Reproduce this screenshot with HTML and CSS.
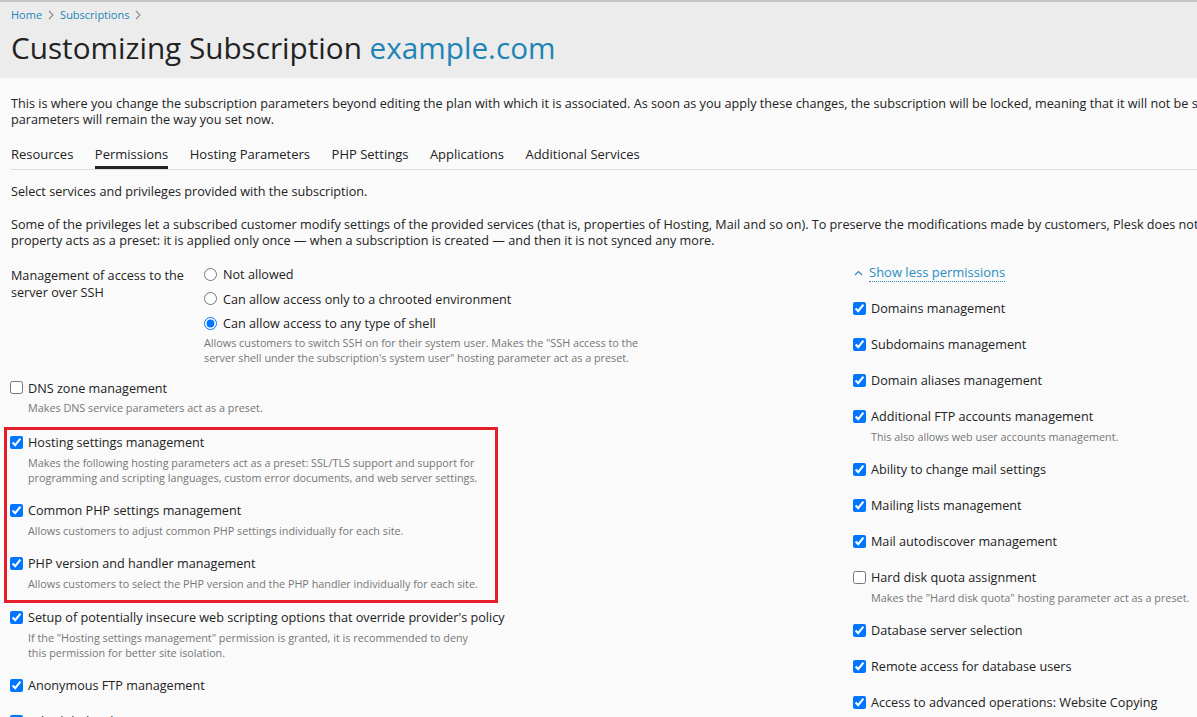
FILE: index.html
```html
<!DOCTYPE html>
<html lang="en">
<head>
<meta charset="utf-8">
<title>Customizing Subscription example.com</title>
<link rel="stylesheet" href="styles.css">
</head>
<body>
<header class="page-header">
  <nav class="breadcrumbs">
    <a href="#">Home</a>
    <svg class="crumb-sep" width="8" height="10" viewBox="0 0 8 10"><polyline points="2,1 6,5 2,9" fill="none" stroke="#8a8a8a" stroke-width="1.1"/></svg>
    <a href="#">Subscriptions</a>
    <svg class="crumb-sep" width="8" height="10" viewBox="0 0 8 10"><polyline points="2,1 6,5 2,9" fill="none" stroke="#8a8a8a" stroke-width="1.1"/></svg>
  </nav>
  <h1 class="title">Customizing Subscription <span class="title-domain">example.com</span></h1>
</header>

<main class="content">
  <p class="intro">This is where you change the subscription parameters beyond editing the plan with which it is associated. As soon as you apply these changes, the subscription will be locked, meaning that it will not be synchronized with the plan, and its<br>parameters will remain the way you set now.</p>

  <ul class="tabs">
    <li class="tab">Resources</li>
    <li class="tab tab-active">Permissions</li>
    <li class="tab">Hosting Parameters</li>
    <li class="tab">PHP Settings</li>
    <li class="tab">Applications</li>
    <li class="tab">Additional Services</li>
  </ul>

  <p class="lead">Select services and privileges provided with the subscription.</p>
  <p class="note">Some of the privileges let a subscribed customer modify settings of the provided services (that is, properties of Hosting, Mail and so on). To preserve the modifications made by customers, Plesk does not sync such settings with the plan. Each such<br>property acts as a preset: it is applied only once — when a subscription is created — and then it is not synced any more.</p>

  <div class="columns">
    <div class="col-left">
      <div class="form-row">
        <div class="row-label">Management of access to the server over SSH</div>
        <div class="row-field">
          <label class="radio"><input type="radio" name="ssh"><span>Not allowed</span></label>
          <label class="radio"><input type="radio" name="ssh"><span>Can allow access only to a chrooted environment</span></label>
          <label class="radio"><input type="radio" name="ssh" checked><span>Can allow access to any type of shell</span></label>
          <div class="desc desc-radio">Allows customers to switch SSH on for their system user. Makes the "SSH access to the<br>server shell under the subscription's system user" hosting parameter act as a preset.</div>
        </div>
      </div>

      <div class="item">
        <label class="check"><input type="checkbox"><span>DNS zone management</span></label>
        <div class="desc">Makes DNS service parameters act as a preset.</div>
      </div>

      <div class="highlight">
        <div class="item">
          <label class="check"><input type="checkbox" checked><span>Hosting settings management</span></label>
          <div class="desc">Makes the following hosting parameters act as a preset: SSL/TLS support and support for<br>programming and scripting languages, custom error documents, and web server settings.</div>
        </div>
        <div class="item">
          <label class="check"><input type="checkbox" checked><span>Common PHP settings management</span></label>
          <div class="desc">Allows customers to adjust common PHP settings individually for each site.</div>
        </div>
        <div class="item">
          <label class="check"><input type="checkbox" checked><span>PHP version and handler management</span></label>
          <div class="desc">Allows customers to select the PHP version and the PHP handler individually for each site.</div>
        </div>
      </div>

      <div class="item">
        <label class="check"><input type="checkbox" checked><span>Setup of potentially insecure web scripting options that override provider's policy</span></label>
        <div class="desc">If the "Hosting settings management" permission is granted, it is recommended to deny<br>this permission for better site isolation.</div>
      </div>
      <div class="item">
        <label class="check"><input type="checkbox" checked><span>Anonymous FTP management</span></label>
      </div>
      <div class="item">
        <label class="check"><input type="checkbox" checked><span>Scheduled tasks management</span></label>
      </div>
    </div>

    <div class="col-right">
      <a class="toggle" href="#">
        <svg class="toggle-icon" width="9" height="6" viewBox="0 0 9 6"><polyline points="1,5 4.5,1.5 8,5" fill="none" stroke="#2a8ec2" stroke-width="1.2"/></svg>
        <span class="toggle-text">Show less permissions</span>
      </a>
      <div class="item">
        <label class="check"><input type="checkbox" checked><span>Domains management</span></label>
      </div>
      <div class="item">
        <label class="check"><input type="checkbox" checked><span>Subdomains management</span></label>
      </div>
      <div class="item">
        <label class="check"><input type="checkbox" checked><span>Domain aliases management</span></label>
      </div>
      <div class="item">
        <label class="check"><input type="checkbox" checked><span>Additional FTP accounts management</span></label>
        <div class="desc">This also allows web user accounts management.</div>
      </div>
      <div class="item">
        <label class="check"><input type="checkbox" checked><span>Ability to change mail settings</span></label>
      </div>
      <div class="item">
        <label class="check"><input type="checkbox" checked><span>Mailing lists management</span></label>
      </div>
      <div class="item">
        <label class="check"><input type="checkbox" checked><span>Mail autodiscover management</span></label>
      </div>
      <div class="item">
        <label class="check"><input type="checkbox"><span>Hard disk quota assignment</span></label>
        <div class="desc">Makes the "Hard disk quota" hosting parameter act as a preset.</div>
      </div>
      <div class="item">
        <label class="check"><input type="checkbox" checked><span>Database server selection</span></label>
      </div>
      <div class="item">
        <label class="check"><input type="checkbox" checked><span>Remote access for database users</span></label>
      </div>
      <div class="item">
        <label class="check"><input type="checkbox" checked><span>Access to advanced operations: Website Copying</span></label>
      </div>
      <div class="item">
        <label class="check"><input type="checkbox" checked><span>Access to advanced operations: Website Importing</span></label>
      </div>
    </div>
  </div>
</main>
</body>
</html>
```

FILE: styles.css
```css
html, body {
  margin: 0;
  padding: 0;
  overflow: hidden;
  height: 100%;
}

body {
  font-family: "Open Sans", "Liberation Sans", sans-serif;
  font-size: 12.65px;
  color: #222222;
  background: #fafafa;
}

a {
  color: #1e84b6;
  text-decoration: none;
}

.page-header {
  background: #ececec;
  border-top: 2px solid #c4c4c4;
  padding: 5px 11px 12px;
}

.breadcrumbs {
  display: flex;
  align-items: center;
  gap: 4px;
  font-size: 11px;
  line-height: 16px;
}

.crumb-sep {
  margin: 0 1px;
}

.title {
  margin: 7px 0 0;
  font-size: 29.7px;
  line-height: 36px;
  font-weight: 400;
  color: #222222;
}

.title-domain {
  color: #1e84b6;
}

.content {
  padding: 0 0 0 11px;
}

.intro {
  margin: 17px 0 0;
  line-height: 16px;
  white-space: nowrap;
}

.tabs {
  list-style: none;
  margin: 19px 0 0;
  padding: 0;
  display: flex;
  gap: 21.5px;
  border-bottom: 1px solid #dcdcdc;
  width: 1400px;
  font-size: 13px;
}

.tab {
  line-height: 16px;
  padding-bottom: 7px;
  color: #222222;
}

.tab-active {
  box-shadow: inset 0 -3px 0 #222222;
}

.lead {
  margin: 13px 0 0;
  line-height: 16px;
}

.note {
  margin: 17px 0 0;
  line-height: 16px;
  white-space: nowrap;
}

.columns {
  display: grid;
  grid-template-columns: 842px 600px;
  margin-top: 17px;
}

.col-left {
  margin-left: -1px;
}

.form-row {
  display: grid;
  grid-template-columns: 194px 1fr;
  margin-bottom: 14px;
}

.row-label {
  line-height: 17px;
  width: 180px;
  padding-left: 1px;
  margin-top: 2px;
}

.row-field {
  display: flex;
  flex-direction: column;
  gap: 6.5px;
}

.radio,
.check {
  display: flex;
  align-items: center;
  gap: 6px;
  line-height: 18px;
}

.check {
  gap: 5px;
}

.radio input,
.check input {
  margin: 0;
  width: 13px;
  height: 13px;
  flex: none;
}

.desc {
  font-size: 10.8px;
  line-height: 15px;
  color: #767676;
  margin: 3.5px 0 -1.5px 18px;
}

.desc-radio {
  margin: -4px 0 0;
}

.item {
  margin-bottom: 18px;
}

.highlight {
  width: 494px;
  box-sizing: border-box;
  margin: -6px 0 5px -6px;
  padding: 3px 0 11px 3px;
  border: 3px solid #e41f2b;
}

.highlight .item:last-child {
  margin-bottom: 0;
}

.col-right {
  display: flex;
  flex-direction: column;
}

.toggle {
  display: flex;
  align-items: center;
  gap: 6px;
  margin: -1px 0 17px 1px;
  line-height: 16px;
  color: #2a8ec2;
  font-size: 13px;
}

.toggle-text {
  border-bottom: 1px dotted #2a8ec2;
  padding-bottom: 1px;
}
```
